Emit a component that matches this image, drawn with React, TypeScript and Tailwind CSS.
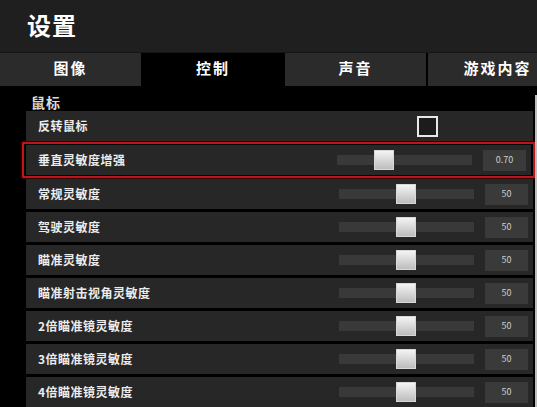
import React from 'react';

type Row = { label: string; value?: string; pos?: number; checkbox?: boolean; highlight?: boolean };

const rows: Row[] = [
  { label: '反转鼠标', checkbox: true },
  { label: '垂直灵敏度增强', value: '0.70', pos: 37, highlight: true },
  { label: '常规灵敏度', value: '50', pos: 57 },
  { label: '驾驶灵敏度', value: '50', pos: 57 },
  { label: '瞄准灵敏度', value: '50', pos: 57 },
  { label: '瞄准射击视角灵敏度', value: '50', pos: 57 },
  { label: '2倍瞄准镜灵敏度', value: '50', pos: 57 },
  { label: '3倍瞄准镜灵敏度', value: '50', pos: 57 },
  { label: '4倍瞄准镜灵敏度', value: '50', pos: 57 },
];

const tabs = ['图像', '控制', '声音', '游戏内容'];

function Slider({ pos }: { pos: number }) {
  return (
    <div className="relative w-[135px] h-[10px] bg-[#393939]">
      <div
        className="absolute top-[-5px] w-[20px] h-[20px] bg-gradient-to-b from-[#f4f4f4] to-[#bdbdbd] border border-[#d8d8d8]"
        style={{ left: `${pos}px` }}
      />
    </div>
  );
}

function SettingRow({ row }: { row: Row }) {
  const inner = (
    <div className="flex items-center h-[30px] bg-[#272727] pl-3 pr-[5px]">
      <span className="flex-1 text-[12px] font-bold text-[#ececec] tracking-[0.5px]">{row.label}</span>
      {row.checkbox ? (
        <div className="w-[21px] h-[21px] border-2 border-[#e8e8e8] bg-[#1c1c1c] mr-[90px]" />
      ) : (
        <>
          <Slider pos={row.pos ?? 0} />
          <div className="ml-[11px] w-[43px] h-[21px] bg-[#3a3a3a] flex items-center justify-center text-[9px] text-[#d0d0d0]">
            {row.value}
          </div>
        </>
      )}
    </div>
  );
  if (row.highlight) {
    return (
      <div className="-ml-[4px] -mr-[2px] -my-[2px] border-2 border-[#c0141c] py-[1px] pl-[2px] pr-[2px] shadow-[0_0_3px_rgba(200,20,28,0.6)]">
        {inner}
      </div>
    );
  }
  return inner;
}

export default function App() {
  return (
    <div
      className="w-[537px] h-[407px] overflow-hidden bg-black"
      style={{ fontFamily: '"Noto Sans CJK SC", "Noto Sans", sans-serif' }}
    >
      <header className="h-[53px] bg-[#1f1f1f] flex items-center pl-[27px] pb-[3px] border-b border-[#151515]">
        <h1 className="text-[24px] font-bold text-white tracking-[1px]">设置</h1>
      </header>
      <nav className="flex h-[33px] bg-black">
        {tabs.map((t, i) => (
          <div
            key={t}
            className={
              i === 1
                ? 'w-[144px] flex items-center justify-center pb-[3px] text-[15px] font-bold text-white bg-black'
                : i === 3
                ? 'flex-1 ml-[2px] flex items-center justify-center pb-[3px] text-[15px] font-bold text-white bg-[#2b2b2b] pl-[30px]'
                : 'w-[141px] flex items-center justify-center pb-[3px] text-[15px] font-bold text-white bg-[#2b2b2b]'
            }
          >
            <span className="tracking-[2px] whitespace-nowrap">{t}</span>
          </div>
        ))}
      </nav>
      <div className="flex">
        <div className="flex-1 pl-[26px] pr-[2px]">
          <div className="pl-[5px] pt-[8px] h-[25px] text-[14px] font-bold text-[#dcdcdc] tracking-[1px] leading-[16px]">
            鼠标
          </div>
          <div className="flex flex-col gap-[3px]">
            {rows.map((r) => (
              <SettingRow key={r.label} row={r} />
            ))}
          </div>
        </div>
        <div className="w-[2px] mt-[9px] h-[320px] bg-[#bdbdbd]" />
      </div>
    </div>
  );
}
